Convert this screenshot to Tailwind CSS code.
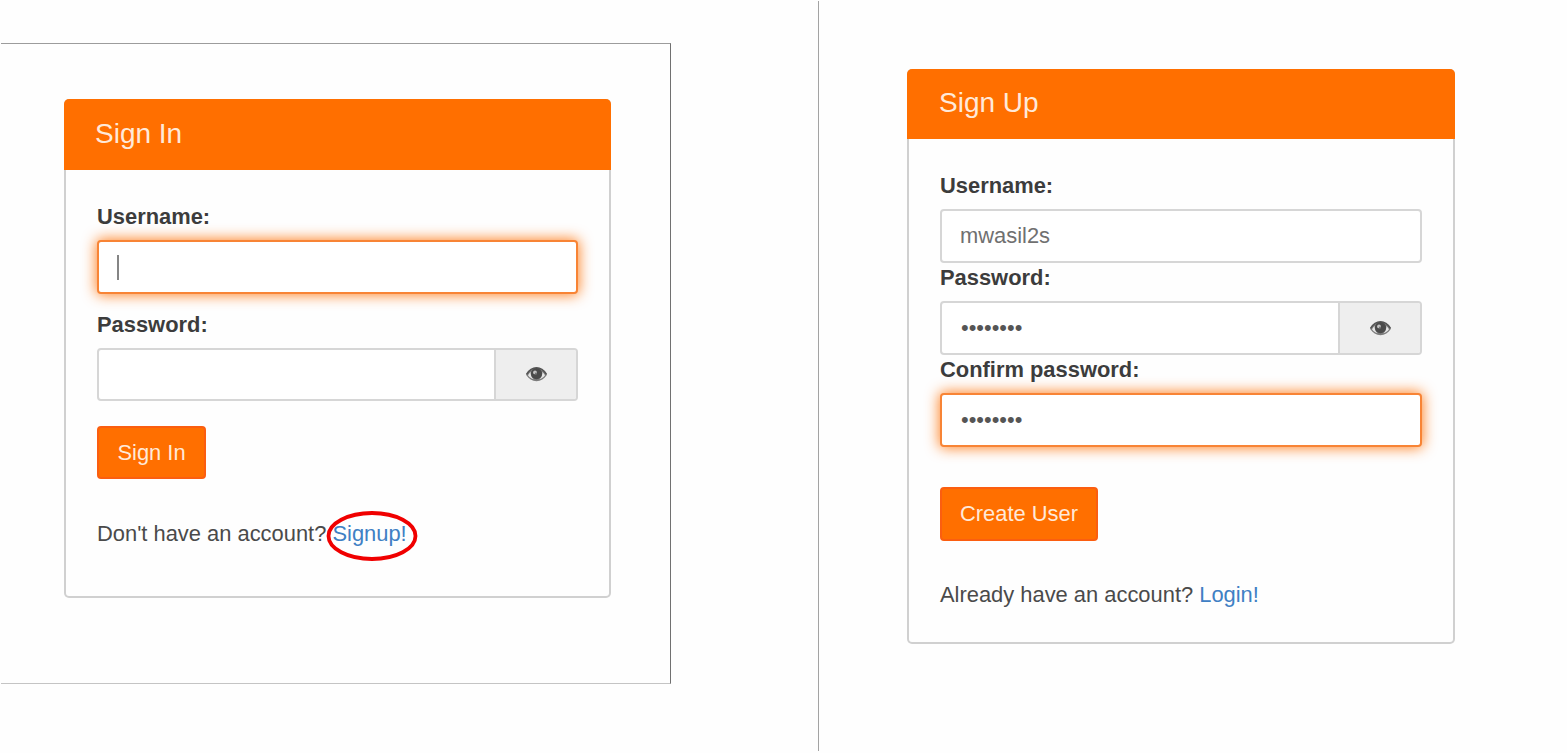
<!DOCTYPE html>
<html lang="en">
<head>
<meta charset="utf-8">
<title>Sign In / Sign Up</title>
<script src="https://cdn.jsdelivr.net/npm/@tailwindcss/browser@4"></script>
</head>
<body class="h-[753px] overflow-hidden bg-[#fefefe] font-['Liberation_Sans',Arial,sans-serif] text-[21.9px] leading-[30px] text-[#4a4a4a]">
<svg class="hidden">
  <symbol id="eye" viewBox="0 0 21 15">
    <path d="M0 7.800C2.800 3 6.400.7 10.500.7s7.700 2.300 10.500 7.100c-2.700 4.300-6.300 6.500-10.500 6.500S2.700 12.100 0 7.800z" fill="#7c7c7c"/>
    <path d="M2 8.200c.7-1.400 1.500-2.500 2.700-3.300-.2 3.400.9 5.800 3 7.400C5.300 11.700 3.400 10.300 2 8.200zM19 8.200c-.7-1.400-1.500-2.500-2.700-3.300.2 3.400-.9 5.800-3 7.400 2.400-.6 4.300-2 5.700-4.100z" fill="#e6e6e6"/>
    <path d="M.6 7.300C3.200 3 6.500.8 10.500.8s7.300 2.200 9.900 6.500" fill="none" stroke="#555" stroke-width="1.500"/>
    <circle cx="10.500" cy="6.600" r="5.600" fill="#4b4b4b"/>
    <circle cx="9" cy="5.400" r="1.900" fill="#c4c4c4"/>
    <circle cx="10" cy="6.600" r="1.100" fill="#777"/>
  </symbol>
</svg>
<main class="flex pt-px">
  <section class="h-[750px] w-[819px] border-r border-[#a3a3a3] pt-[42px] pl-px">
    <div class="h-[641px] w-[670px] border-y border-r border-t-[#9c9c9c] border-r-[#707070] border-b-[#c4c4c4] pt-[55px] pl-[63px]">
      <div class="h-[499px] w-[547px] overflow-hidden rounded-[5px] bg-[#d0d0d0]">
        <h1 class="h-[71px] bg-[#ff6f00] pt-[20px] pl-[31px] text-[28px] text-[#ffe9d9]">Sign In</h1>
        <form class="mx-0.5 h-[426px] rounded-b-[3px] bg-[#fefefe] px-[31px] pt-[32px]">
          <label class="block h-[38px] font-bold text-[#3c3c3c]">Username:</label>
          <div class="flex h-[54px] items-center rounded-[4px] border-2 border-[#f88435] bg-white pl-[18px] shadow-[0_0_14px_1px_rgba(255,111,0,0.85)]"><span class="h-[25px] w-[2px] bg-[#858585]"></span></div>
          <label class="mt-4 block h-[38px] font-bold text-[#3c3c3c]">Password:</label>
          <div class="flex h-[53px] overflow-hidden rounded-[4px] border-2 border-[#d6d6d6] bg-white">
            <div class="grow"></div>
            <div class="flex w-[82px] items-center justify-center border-l-2 border-[#d6d6d6] bg-[#eee]"><svg class="h-[15px] w-[21px]"><use href="#eye"/></svg></div>
          </div>
          <button type="button" class="mt-[25px] block h-[53px] w-[109px] rounded-[4px] border-2 border-[#fb5e10] bg-[#ff6f00] text-[#ffe9d9]">Sign In</button>
          <p class="mt-10 whitespace-nowrap">Don't have an account? <span class="relative text-[#3f80c4]">Signup!<svg class="absolute top-[-10px] left-[-6px] h-[50px] w-[92px]" fill="none"><ellipse cx="46" cy="25" rx="43.500" ry="23" stroke="#f00000" stroke-width="3.800"/></svg></span></p>
        </form>
      </div>
    </div>
  </section>
  <section class="pt-[68px] pl-[88px]">
    <div class="h-[575px] w-[548px] overflow-hidden rounded-[5px] bg-[#d0d0d0]">
      <h1 class="h-[70px] bg-[#ff6f00] pt-[19px] pl-[32px] text-[28px] text-[#ffe9d9]">Sign Up</h1>
      <form class="mx-0.5 h-[503px] rounded-b-[3px] bg-[#fefefe] px-[31px] pt-[32px]">
        <label class="block h-[38px] font-bold text-[#3c3c3c]">Username:</label>
        <div class="flex h-[54px] items-center rounded-[4px] border-2 border-[#d6d6d6] bg-white pl-[18px] text-[#707070]">mwasil2s</div>
        <label class="block h-[38px] font-bold text-[#3c3c3c]">Password:</label>
        <div class="flex h-[54px] overflow-hidden rounded-[4px] border-2 border-[#d6d6d6] bg-white">
          <div class="flex grow items-center pl-[19px] text-[#555]">••••••••</div>
          <div class="flex w-[82px] items-center justify-center border-l-2 border-[#d6d6d6] bg-[#eee]"><svg class="h-[15px] w-[21px]"><use href="#eye"/></svg></div>
        </div>
        <label class="block h-[38px] font-bold text-[#3c3c3c]">Confirm password:</label>
        <div class="flex h-[54px] items-center rounded-[4px] border-2 border-[#f88435] bg-white pl-[19px] text-[#555] shadow-[0_0_14px_1px_rgba(255,111,0,0.85)]">••••••••</div>
        <button type="button" class="mt-10 block h-[54px] w-[158px] rounded-[4px] border-2 border-[#fb5e10] bg-[#ff6f00] text-[#ffe9d9]">Create User</button>
        <p class="mt-[39px] whitespace-nowrap">Already have an account? <span class="text-[#3f80c4]">Login!</span></p>
      </form>
    </div>
  </section>
</main>
</body>
</html>
